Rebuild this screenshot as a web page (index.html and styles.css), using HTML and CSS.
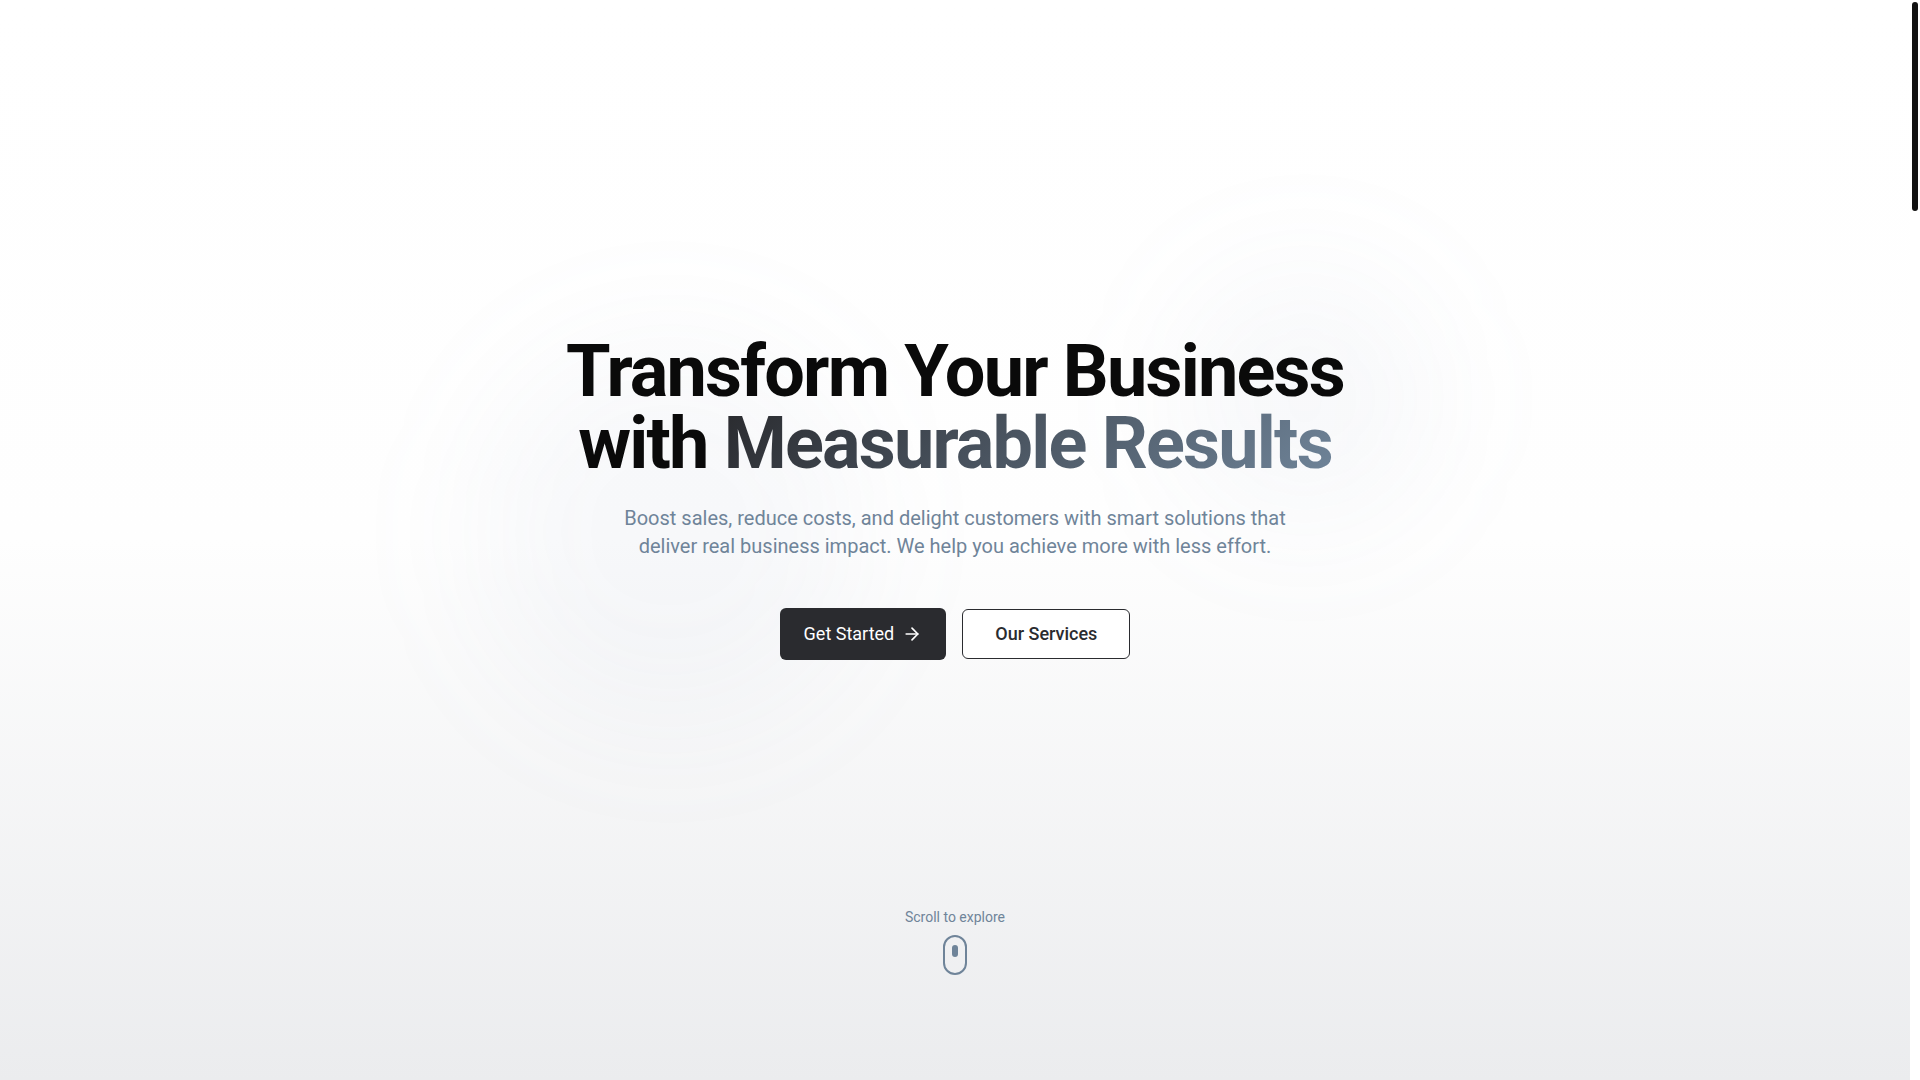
FILE: index.html
```html
<!DOCTYPE html>
<html lang="en">
<head>
  <meta charset="UTF-8">
  <meta name="viewport" content="width=device-width, initial-scale=1.0">
  <title>Transform Your Business</title>
  <link rel="stylesheet" href="styles.css">
</head>
<body>
  <main class="hero">
    <div class="glow glow-left"></div>
    <div class="glow glow-right"></div>

    <section class="hero-content">
      <h1>Transform Your Business<br>with <span class="gradient-text">Measurable Results</span></h1>
      <p class="lead">Boost sales, reduce costs, and delight customers with smart solutions that deliver real business impact. We help you achieve more with less effort.</p>
      <div class="actions">
        <a class="btn btn-primary" href="#contact">
          Get Started
          <svg class="icon" viewBox="0 0 24 24" fill="none" stroke="currentColor" stroke-width="2" stroke-linecap="round" stroke-linejoin="round" aria-hidden="true">
            <path d="M5 12h14"/>
            <path d="m12 5 7 7-7 7"/>
          </svg>
        </a>
        <a class="btn btn-outline" href="#services">Our Services</a>
      </div>
    </section>

    <div class="scroll-hint">
      <span>Scroll to explore</span>
      <div class="mouse"><div class="wheel"></div></div>
    </div>
  </main>
  <div class="scroll-track"><div class="scroll-thumb"></div></div>
</body>
</html>
```
FILE: styles.css
```css
* {
  box-sizing: border-box;
}

body {
  margin: 0;
  min-height: 100vh;
  display: flex;
  background-color: white;
  color: #0a0a0a;
  font-family: Roboto, Arial, sans-serif;
}

.hero {
  flex: 1;
  position: relative;
  overflow: hidden;
  display: grid;
  grid-template-rows: 1fr auto 1fr;
  justify-items: center;
  background: linear-gradient(to bottom, #ffffff, #fefefe 50%, #ebecee);
}

/* soft colour spots behind the text */
.glow {
  position: absolute;
  border-radius: 50%;
  background-color: rgba(112, 136, 176, 0.05);
  filter: blur(64px);
}

.glow-left {
  left: 25%;
  bottom: 33%;
  width: 384px;
  height: 384px;
}

.glow-right {
  right: 25%;
  top: 25%;
  width: 256px;
  height: 256px;
}

.hero-content {
  grid-row: 2;
  position: relative;
  max-width: 896px;
  padding: 0 16px 84px;
  text-align: center;
}

h1 {
  margin: 0 0 24px;
  font-size: 72px;
  font-weight: 700;
  line-height: 72px;
  letter-spacing: -0.025em;
}

.gradient-text {
  display: inline-block;
  background: linear-gradient(135deg, #2a2b2f, #6f8499);
  -webkit-background-clip: text;
  background-clip: text;
  color: transparent;
}

.lead {
  max-width: 672px;
  margin: 0 auto 48px;
  color: #6f8499;
  font-size: 20px;
  line-height: 28px;
}

.actions {
  display: flex;
  justify-content: center;
  align-items: center;
  gap: 16px;
}

.btn {
  display: flex;
  align-items: center;
  justify-content: center;
  gap: 8px;
  border-radius: 6px;
  font-size: 18px;
  line-height: 28px;
  text-decoration: none;
}

.btn-primary {
  padding: 12px 24px;
  background-color: #2a2b2f;
  color: white;
}

.btn-outline {
  padding: 10px 32px;
  border: 1px solid #2a2b2f;
  background-color: white;
  color: #2a2b2f;
  font-weight: 500;
}

.icon {
  width: 20px;
  height: 20px;
}

.scroll-hint {
  grid-row: 3;
  position: relative;
  align-self: end;
  display: flex;
  flex-direction: column;
  align-items: center;
  gap: 8px;
  padding-bottom: 105px;
  color: #6f8499;
  font-size: 14px;
  line-height: 20px;
}

.mouse {
  width: 24px;
  height: 40px;
  padding-top: 8px;
  border: 2px solid #6f8499;
  border-radius: 12px;
}

.wheel {
  width: 6px;
  height: 12px;
  margin: 0 auto;
  border-radius: 3px;
  background-color: #6f8499;
}

.scroll-track {
  width: 10px;
  padding: 2px;
  background-color: white;
}

.scroll-thumb {
  height: 209px;
  border-radius: 3px;
  background-color: #111111;
}
```
